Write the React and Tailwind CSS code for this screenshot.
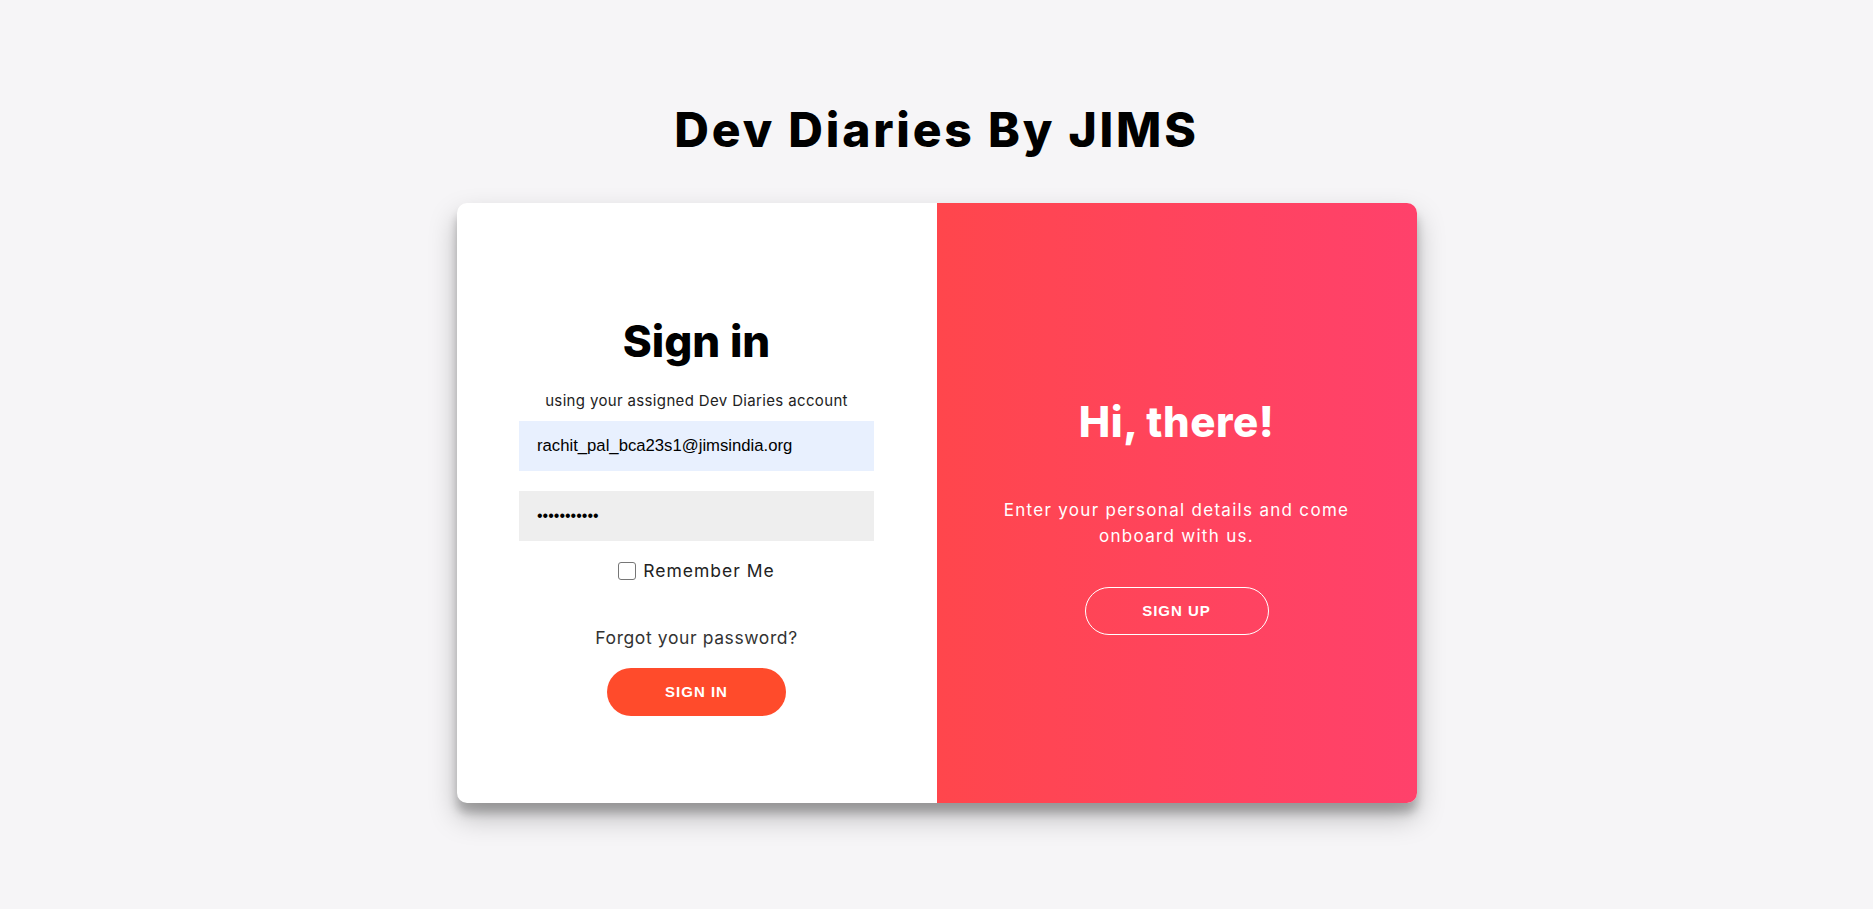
export default function App() {
  return (
    <div className="min-h-screen bg-[#f6f5f7] flex flex-col items-center pt-[106px] font-['Inter',sans-serif]">
      <h1 className="text-[48px] leading-none font-extrabold tracking-[2.8px] text-black">Dev Diaries By JIMS</h1>

      {/* card */}
      <div className="mt-[49px] w-[960px] h-[600px] flex rounded-[10px] overflow-hidden bg-white shadow-[0_14px_28px_rgba(0,0,0,0.25),0_10px_10px_rgba(0,0,0,0.22)]">
        {/* sign in form */}
        <form className="w-1/2 flex flex-col items-center pt-[116px]" onSubmit={(e) => e.preventDefault()}>
          <h2 className="text-[44px] leading-none font-extrabold text-black">Sign in</h2>
          <span className="mt-[28px] text-[15px] leading-[20px] tracking-[0.35px] text-[#222]">using your assigned Dev Diaries account</span>
          <input
            type="email"
            defaultValue="rachit_pal_bca23s1@jimsindia.org"
            className="mt-[10px] w-[355px] h-[50px] pl-[18px] bg-[#e8f0fe] text-black text-[16.7px] font-['Liberation_Sans',Arial,sans-serif] outline-none"
          />
          <input
            type="password"
            defaultValue="abcdefghijk"
            className="mt-[20px] w-[355px] h-[50px] pl-[18px] bg-[#eeeeee] text-black text-[16px] font-['Liberation_Sans',Arial,sans-serif] outline-none"
          />
          <label className="mt-[18px] h-[24px] flex items-center gap-[7px] text-[17.5px] tracking-[1px] text-[#222]">
            <input type="checkbox" className="appearance-none w-[18px] h-[18px] border-[1.5px] border-[#767676] rounded-[3px] bg-white" />
            Remember Me
          </label>
          <a href="#" className="mt-[45px] text-[17.5px] leading-[20px] tracking-[0.6px] text-[#333]">Forgot your password?</a>
          <button className="mt-[20px] w-[179px] h-[48px] rounded-full bg-[#ff4b2b] text-white text-[15px] font-bold tracking-[1px] font-['Liberation_Sans',Arial,sans-serif]">
            SIGN IN
          </button>
        </form>

        {/* overlay */}
        <div className="w-1/2 flex flex-col items-center pt-[198px] text-white bg-gradient-to-r from-[#ff464c] to-[#ff416b]">
          <h2 className="text-[42px] leading-none font-extrabold tracking-[0.5px]">Hi, there!</h2>
          <p className="mt-[54px] w-[380px] text-center text-[17px] leading-[26px] tracking-[1.3px]">
            Enter your personal details and come onboard with us.
          </p>
          <button className="mt-[38px] w-[184px] h-[48px] rounded-full border border-white text-white text-[15px] font-bold tracking-[1px] font-['Liberation_Sans',Arial,sans-serif]">
            SIGN UP
          </button>
        </div>
      </div>
    </div>
  );
}
